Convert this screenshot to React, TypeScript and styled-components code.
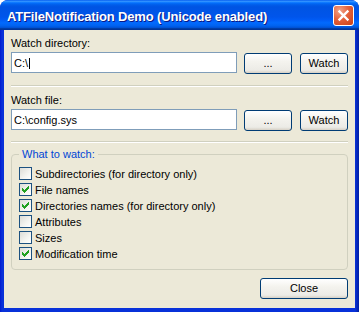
import React from "react";
import styled, { createGlobalStyle } from "styled-components";

const Global = createGlobalStyle`
  html, body { margin: 0; padding: 0; background: #ffffff; }
  body { font-family: "Liberation Sans", Arial, sans-serif; font-size: 11px; color: #000; }
`;

const Window = styled.div`
  width: 359px;
  height: 312px;
  box-sizing: border-box;
  display: flex;
  flex-direction: column;
  background: linear-gradient(to right, #0019cf 0px, #0831d9 2px, #0831d9 355px, #001ea0 359px);
  border-radius: 8px 8px 0 0;
  overflow: hidden;
`;

const TitleBar = styled.div`
  height: 30px;
  flex: none;
  box-sizing: border-box;
  display: flex;
  align-items: center;
  justify-content: space-between;
  padding: 0 5px 0 7px;
  background: linear-gradient(
    to bottom,
    #0058ee 0%,
    #3593ff 4%,
    #288eff 6%,
    #127dff 8%,
    #036ffc 10%,
    #0262ee 14%,
    #0057e5 20%,
    #0054e3 24%,
    #0055eb 56%,
    #005bf5 66%,
    #026afe 76%,
    #0062ef 86%,
    #0052d6 92%,
    #0040ab 94%,
    #003092 100%
  );
`;

const Title = styled.span`
  color: #ffffff;
  font-weight: bold;
  font-size: 13px;
  letter-spacing: -0.15px;
  text-shadow: 1px 1px 0 #0a1883;
  margin-top: 2px;
`;

const CloseButton = styled.div`
  width: 21px;
  height: 21px;
  box-sizing: border-box;
  border: 1px solid #ffffff;
  border-radius: 3px;
  background: radial-gradient(circle at 30% 25%, #f0a48a 0%, #e4623c 45%, #cc4015 100%);
  display: flex;
  align-items: center;
  justify-content: center;
`;

const Body = styled.div`
  flex: 1;
  margin: 0 4px 4px;
  background: #ece9d8;
  padding: 7px 7px 0;
  display: flex;
  flex-direction: column;
`;

const Label = styled.div<{ $top?: number }>`
  line-height: 13px;
  margin-top: ${(p) => p.$top ?? 0}px;
`;

const InputRow = styled.div`
  display: flex;
  align-items: flex-start;
  height: 22px;
  margin-top: 2px;
`;

const Edit = styled.div`
  width: 226px;
  height: 21px;
  box-sizing: border-box;
  border: 1px solid #7f9db9;
  background: #ffffff;
  padding: 4px 2px 0;
  line-height: 13px;
  white-space: pre;
  display: flex;
  align-items: flex-start;
`;

const Caret = styled.span`
  display: inline-block;
  width: 1px;
  height: 11px;
  margin-top: 1px;
  margin-left: 1px;
  background: #000;
`;

const Button = styled.button<{ $w: number; $ml?: number; $mt?: number }>`
  width: ${(p) => p.$w}px;
  height: 21px;
  margin: ${(p) => p.$mt ?? 1}px 0 0 ${(p) => p.$ml ?? 0}px;
  padding: 0;
  box-sizing: border-box;
  border: 1px solid #003c74;
  border-radius: 3px;
  background: linear-gradient(to bottom, #ffffff 0%, #f4f3ee 40%, #ecebe6 85%, #d6d0c5 100%);
  font-family: "Liberation Sans", Arial, sans-serif;
  font-size: 11px;
  color: #000;
  line-height: 17px;
`;

const Separator = styled.div<{ $top: number }>`
  margin-top: ${(p) => p.$top}px;
  border-top: 1px solid #d0d0bf;
  border-bottom: 1px solid #ffffff;
  height: 0;
`;

const Group = styled.fieldset`
  margin: 5px 0 0;
  padding: 0 7px 7px;
  border: 1px solid #d0d0bf;
  border-radius: 4px;
  min-width: 0;
`;

const Legend = styled.legend`
  padding: 0 3px;
  line-height: 13px;
  color: #0046d5;
`;

const CheckList = styled.div`
  padding-top: 5px;
  display: flex;
  flex-direction: column;
`;

const CheckRow = styled.div`
  display: flex;
  align-items: flex-start;
  height: 16px;
  line-height: 16px;
  gap: 3px;
`;

const Box = styled.div`
  width: 13px;
  height: 13px;
  margin-top: 1px;
  box-sizing: border-box;
  border: 1px solid #1c5180;
  background: linear-gradient(135deg, #dcdcd7 0%, #f4f4f0 60%, #ffffff 100%);
  flex: none;
`;

const Footer = styled.div`
  display: flex;
  justify-content: flex-end;
  margin-top: 8px;
`;

const CheckMark = () => (
  <svg width="11" height="11" viewBox="0 0 11 11" shapeRendering="crispEdges" style={{ display: "block" }}>
    <g fill="#21a121">
      <rect x="8" y="2" width="1" height="1" />
      <rect x="7" y="3" width="2" height="1" />
      <rect x="2" y="4" width="1" height="1" />
      <rect x="6" y="4" width="3" height="1" />
      <rect x="2" y="5" width="2" height="1" />
      <rect x="5" y="5" width="3" height="1" />
      <rect x="2" y="6" width="5" height="1" />
      <rect x="3" y="7" width="3" height="1" />
      <rect x="4" y="8" width="1" height="1" />
    </g>
  </svg>
);

const CloseX = () => (
  <svg width="13" height="13" viewBox="0 0 13 13">
    <path d="M2.5 2.5 L10.5 10.5 M10.5 2.5 L2.5 10.5" stroke="#ffffff" strokeWidth="2.4" strokeLinecap="square" />
  </svg>
);

const options: { label: string; checked: boolean }[] = [
  { label: "Subdirectories (for directory only)", checked: false },
  { label: "File names", checked: true },
  { label: "Directories names (for directory only)", checked: true },
  { label: "Attributes", checked: false },
  { label: "Sizes", checked: false },
  { label: "Modification time", checked: true },
];

export default function App() {
  return (
    <>
      <Global />
      <Window>
        <TitleBar>
          <Title>ATFileNotification Demo (Unicode enabled)</Title>
          <CloseButton>
            <CloseX />
          </CloseButton>
        </TitleBar>
        <Body>
          <Label>Watch directory:</Label>
          <InputRow>
            <Edit>
              C:\
              <Caret />
            </Edit>
            <Button $w={48} $ml={7}>...</Button>
            <Button $w={48} $ml={8}>Watch</Button>
          </InputRow>
          <Separator $top={11} />
          <Label $top={7}>Watch file:</Label>
          <InputRow>
            <Edit>C:\config.sys</Edit>
            <Button $w={48} $ml={7}>...</Button>
            <Button $w={48} $ml={8}>Watch</Button>
          </InputRow>
          <Separator $top={10} />
          <Group>
            <Legend>What to watch:</Legend>
            <CheckList>
              {options.map((o) => (
                <CheckRow key={o.label}>
                  <Box>{o.checked && <CheckMark />}</Box>
                  <span>{o.label}</span>
                </CheckRow>
              ))}
            </CheckList>
          </Group>
          <Footer>
            <Button $w={88} $mt={0}>Close</Button>
          </Footer>
        </Body>
      </Window>
    </>
  );
}
